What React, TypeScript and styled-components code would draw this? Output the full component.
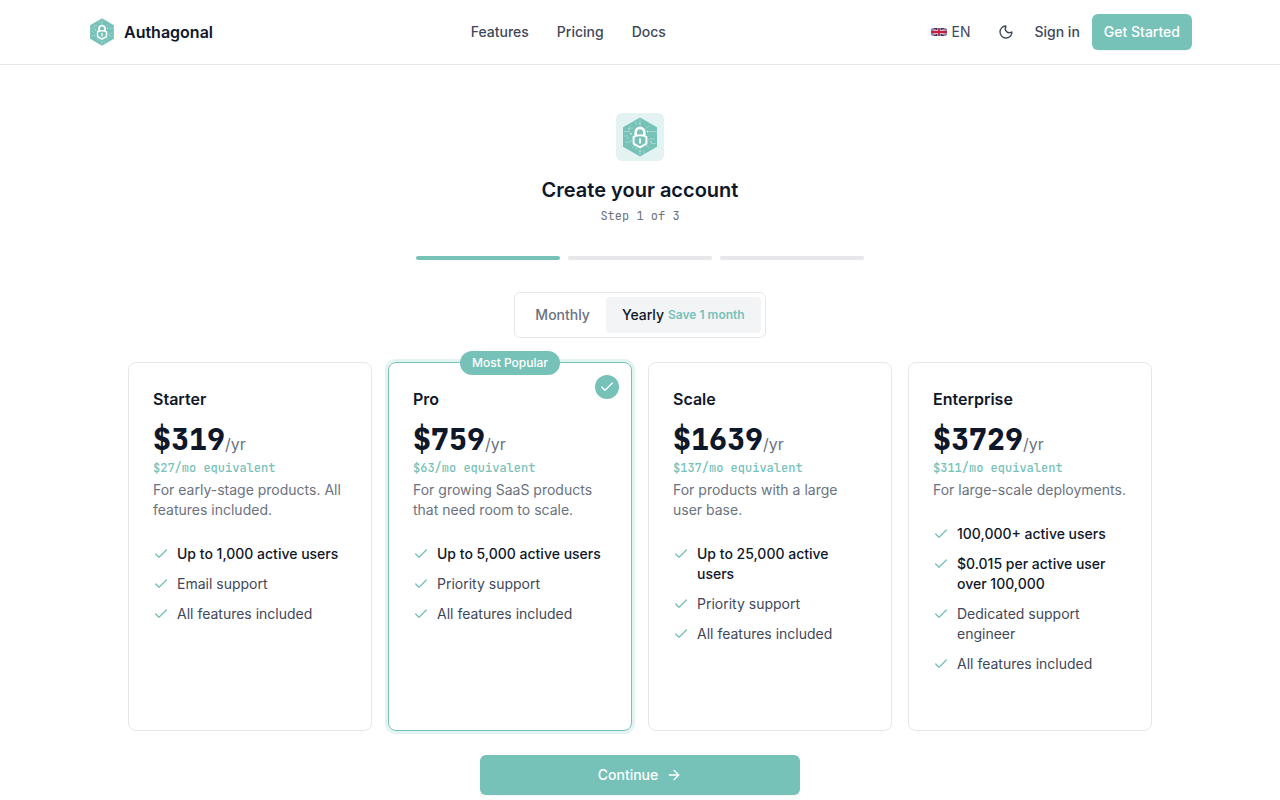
import React, { useState } from "react";
import styled, { createGlobalStyle, css } from "styled-components";
import { ArrowRight, Check, Moon } from "lucide-react";

const teal = "#76c2b9";
const tealSoft = "#e3f3f1";
const ink = "#0f172a";
const slate = "#3f4859";
const muted = "#6b7280";
const line = "#e5e7eb";
const mono = `"JetBrains Mono", "DejaVu Sans Mono", monospace`;

const GlobalStyle = createGlobalStyle`
  *, *::before, *::after { box-sizing: border-box; }
  body {
    margin: 0;
    background: #fff;
    color: ${ink};
    font: 400 14px/20px Inter, sans-serif;
  }
  button { font: inherit; color: inherit; border: 0; background: none; padding: 0; cursor: pointer; }
  a { color: inherit; text-decoration: none; }
  h1, p { margin: 0; }
`;

const Header = styled.header`
  border-bottom: 1px solid ${line};
`;
const HeaderInner = styled.div`
  max-width: 1152px;
  height: 64px;
  margin: 0 auto;
  padding: 0 24px;
  display: flex;
  align-items: center;
  justify-content: space-between;
`;
const Brand = styled.a`
  display: flex;
  align-items: center;
  gap: 8px;
  font-size: 16px;
  line-height: 24px;
  font-weight: 600;
`;
const Nav = styled.nav`
  display: flex;
  gap: 28px;
  color: ${slate};
  font-weight: 500;
`;
const Actions = styled.div`
  display: flex;
  align-items: center;
  gap: 12px;
  color: ${slate};
`;
const Language = styled.button`
  display: flex;
  align-items: center;
  gap: 4px;
  padding: 8px;
`;
const IconButton = styled.button`
  display: grid;
  place-items: center;
  width: 32px;
  height: 32px;
`;
const SignIn = styled.a`
  font-weight: 500;
`;
const primary = css`
  background: ${teal};
  color: #fff;
  font-weight: 500;
  border-radius: 6px;
  box-shadow: 0 1px 2px rgba(0, 0, 0, 0.05);
`;
const GetStarted = styled.a`
  ${primary}
  padding: 8px 12px;
`;

const Main = styled.main`
  max-width: 1072px;
  margin: 0 auto;
  padding: 48px 24px;
  display: flex;
  flex-direction: column;
  align-items: center;
`;
const LogoTile = styled.div`
  display: grid;
  place-items: center;
  width: 48px;
  height: 48px;
  border-radius: 6px;
  background: ${tealSoft};
`;
const Title = styled.h1`
  margin-top: 16px;
  font-size: 20px;
  line-height: 26px;
  font-weight: 600;
`;
const StepText = styled.p`
  margin-top: 5px;
  font: 400 12px/16px ${mono};
  color: ${muted};
`;
const Steps = styled.div`
  display: grid;
  grid-template-columns: repeat(3, 1fr);
  gap: 8px;
  width: 100%;
  max-width: 448px;
  margin: 32px 0;
`;
const StepBar = styled.span<{ $done: boolean }>`
  height: 4px;
  border-radius: 2px;
  background: ${(p) => (p.$done ? teal : line)};
`;
const Toggle = styled.div`
  display: flex;
  padding: 4px;
  border: 1px solid ${line};
  border-radius: 6px;
`;
const ToggleButton = styled.button<{ $active: boolean }>`
  display: flex;
  align-items: center;
  gap: 4px;
  padding: 8px 16px;
  border-radius: 4px;
  font-weight: 500;
  background: ${(p) => (p.$active ? "#f3f4f6" : "transparent")};
  color: ${(p) => (p.$active ? ink : muted)};
`;
const Saving = styled.span`
  color: ${teal};
  font-size: 12px;
  font-weight: 600;
`;
const Plans = styled.div`
  display: grid;
  grid-template-columns: repeat(4, 1fr);
  gap: 16px;
  width: 100%;
  margin: 24px 0;
`;
const Card = styled.button<{ $selected: boolean }>`
  position: relative;
  display: flex;
  flex-direction: column;
  align-items: flex-start;
  justify-content: flex-start;
  padding: 24px 24px 56px;
  text-align: left;
  border: 1px solid ${(p) => (p.$selected ? teal : line)};
  border-radius: 8px;
  box-shadow: ${(p) => (p.$selected ? `0 0 0 3px ${tealSoft}` : "none")};
`;
const Popular = styled.span`
  position: absolute;
  top: -12px;
  left: 50%;
  transform: translateX(-50%);
  padding: 4px 12px;
  border-radius: 12px;
  background: ${teal};
  color: #fff;
  font-size: 12px;
  line-height: 16px;
  font-weight: 500;
  white-space: nowrap;
`;
const Selected = styled.span`
  position: absolute;
  top: 12px;
  right: 12px;
  display: grid;
  place-items: center;
  width: 24px;
  height: 24px;
  border-radius: 50%;
  background: ${teal};
  color: #fff;
`;
const PlanName = styled.span`
  font-size: 16px;
  line-height: 24px;
  font-weight: 600;
`;
const Price = styled.span`
  display: flex;
  align-items: baseline;
  margin-top: 8px;
  color: ${muted};
  font-size: 16px;
  line-height: 24px;
`;
const Amount = styled.span`
  font: 800 30px/41px ${mono};
  color: ${ink};
`;
const Monthly = styled.span`
  font: 500 12px/16px ${mono};
  color: ${teal};
`;
const Blurb = styled.span`
  margin-top: 4px;
  color: ${muted};
`;
const Features = styled.span`
  display: flex;
  flex-direction: column;
  gap: 10px;
  margin-top: 24px;
`;
const Feature = styled.span<{ $strong: boolean }>`
  display: flex;
  gap: 8px;
  color: ${(p) => (p.$strong ? ink : slate)};
  font-weight: ${(p) => (p.$strong ? 500 : 400)};
  svg { flex: none; margin-top: 2px; color: ${teal}; }
`;
const Continue = styled.button`
  ${primary}
  display: flex;
  align-items: center;
  justify-content: center;
  gap: 8px;
  width: 100%;
  max-width: 320px;
  height: 40px;
`;

function Logo({ size }: { size: number }) {
  return (
    <svg width={size} height={size} viewBox="0 0 40 40" fill="none" aria-hidden="true">
      <path d="M20 .5 37 10.2v19.6L20 39.5 3 29.8V10.2z" fill={teal} />
      <g stroke="#fff" strokeOpacity=".65" strokeWidth=".5">
        <path d="M20 2v5M20 34v4M16 4v4M24 33v3M4 14.500h5l2 2M4 19h4M5 25h5l2-1.500M37 14.500H27M35 22h-5l-1.500 1.500M36 26.500h-5M10 9v3M29 9l-2.500 2.500M12 31l3-3M29 31l-3-3M16 33v-3" />
      </g>
      <g fill="#fff" fillOpacity=".8">
        <circle cx="20" cy="7" r=".7" /><circle cx="9" cy="12" r=".7" /><circle cx="11" cy="17" r=".8" />
        <circle cx="8" cy="21" r=".6" /><circle cx="27.500" cy="14.500" r=".7" /><circle cx="31" cy="25" r=".7" />
        <circle cx="12" cy="11" r=".6" /><circle cx="20" cy="34" r=".7" /><circle cx="15" cy="28.500" r=".6" />
      </g>
      <path d="M15.700 18.500v-3.300a4.300 4.300 0 0 1 8.600 0v3.300" stroke="#fff" strokeWidth="2.600" />
      <path d="M20 18.300c2.600 0 4.600.5 6.400 1.500v6.900L20 30.300l-6.400-3.600v-6.900c1.800-1 3.800-1.500 6.400-1.500z" fill={teal} stroke="#fff" strokeWidth="2" strokeLinejoin="round" />
      <path d="M20 21.500v5" stroke="#fff" strokeWidth="1.800" />
    </svg>
  );
}

function Flag() {
  return (
    <svg width="16" height="8" viewBox="0 0 16 8" aria-hidden="true">
      <clipPath id="flag"><rect width="16" height="8" rx="3" /></clipPath>
      <g clipPath="url(#flag)">
        <rect width="16" height="8" fill="#2b3775" />
        <path d="M0 0 16 8M16 0 0 8" stroke="#e6dfea" strokeWidth="1.300" />
        <path d="M0 0 16 8M16 0 0 8" stroke="#c4213f" strokeWidth=".6" />
        <path d="M8 0v8M0 4h16" stroke="#f1e4ea" strokeWidth="3" />
        <path d="M8 0v8M0 4h16" stroke="#c4213f" strokeWidth="1.800" />
      </g>
    </svg>
  );
}

const plans = [
  { name: "Starter", price: "$319", monthly: "$27", blurb: "For early-stage products. All features included.", features: ["Up to 1,000 active users", "Email support", "All features included"], strong: 1 },
  { name: "Pro", price: "$759", monthly: "$63", blurb: "For growing SaaS products that need room to scale.", features: ["Up to 5,000 active users", "Priority support", "All features included"], strong: 1, popular: true },
  { name: "Scale", price: "$1639", monthly: "$137", blurb: "For products with a large user base.", features: ["Up to 25,000 active users", "Priority support", "All features included"], strong: 1 },
  { name: "Enterprise", price: "$3729", monthly: "$311", blurb: "For large-scale deployments.", features: ["100,000+ active users", "$0.015 per active user over 100,000", "Dedicated support engineer", "All features included"], strong: 2 },
];

export default function App() {
  const [plan, setPlan] = useState("Pro");
  const [yearly, setYearly] = useState(true);
  return (
    <>
      <GlobalStyle />
      <Header>
        <HeaderInner>
          <Brand href="#"><Logo size={28} />Authagonal</Brand>
          <Nav>
            <a href="#features">Features</a>
            <a href="#pricing">Pricing</a>
            <a href="#docs">Docs</a>
          </Nav>
          <Actions>
            <Language type="button"><Flag />EN</Language>
            <IconButton type="button" aria-label="Toggle dark mode"><Moon size={16} /></IconButton>
            <SignIn href="#signin">Sign in</SignIn>
            <GetStarted href="#start">Get Started</GetStarted>
          </Actions>
        </HeaderInner>
      </Header>
      <Main>
        <LogoTile><Logo size={40} /></LogoTile>
        <Title>Create your account</Title>
        <StepText>Step 1 of 3</StepText>
        <Steps aria-hidden="true">
          <StepBar $done />
          <StepBar $done={false} />
          <StepBar $done={false} />
        </Steps>
        <Toggle>
          <ToggleButton type="button" $active={!yearly} onClick={() => setYearly(false)}>Monthly</ToggleButton>
          <ToggleButton type="button" $active={yearly} onClick={() => setYearly(true)}>
            Yearly <Saving>Save 1 month</Saving>
          </ToggleButton>
        </Toggle>
        <Plans>
          {plans.map((p) => (
            <Card key={p.name} type="button" $selected={plan === p.name} aria-pressed={plan === p.name} onClick={() => setPlan(p.name)}>
              {p.popular && <Popular>Most Popular</Popular>}
              {plan === p.name && <Selected><Check size={16} /></Selected>}
              <PlanName>{p.name}</PlanName>
              <Price><Amount>{p.price}</Amount>/yr</Price>
              <Monthly>{p.monthly}/mo equivalent</Monthly>
              <Blurb>{p.blurb}</Blurb>
              <Features>
                {p.features.map((f, i) => (
                  <Feature key={f} $strong={i < p.strong}><Check size={16} /><span>{f}</span></Feature>
                ))}
              </Features>
            </Card>
          ))}
        </Plans>
        <Continue type="button">Continue <ArrowRight size={16} /></Continue>
      </Main>
    </>
  );
}
